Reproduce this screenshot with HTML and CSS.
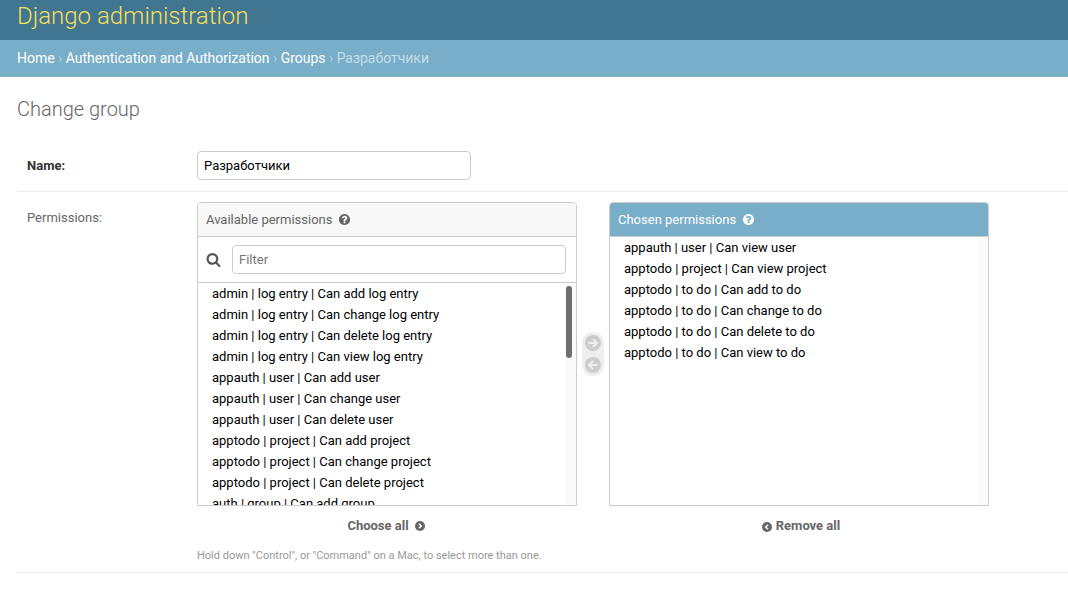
FILE: index.html
```html
<!DOCTYPE html>
<html lang="en">
<head>
<meta charset="utf-8">
<title>Change group</title>
<link rel="stylesheet" href="styles.css">
</head>
<body>
<header class="header"><span class="brand">Django administration</span></header>
<nav class="crumbs"><a>Home</a><i>›</i><a>Authentication and Authorization</a><i>›</i><a>Groups</a><i>›</i><span>Разработчики</span></nav>
<main class="content">
  <h1 class="title">Change group</h1>
  <div class="row row-name">
    <label class="label label-req">Name:</label>
    <div class="name-input">Разработчики</div>
  </div>
  <div class="row row-perm">
    <label class="label label-perm">Permissions:</label>
    <div class="field">
      <div class="selector">
        <div class="col">
          <div class="box">
            <div class="box-title">Available permissions
              <svg class="help" viewBox="0 0 1792 1792"><path fill="#666" d="M1024 1376v-192q0-14-9-23t-23-9h-192q-14 0-23 9t-9 23v192q0 14 9 23t23 9h192q14 0 23-9t9-23zm256-672q0-88-55.5-163t-138.5-116-170-41q-243 0-371 213-15 24 8 42l132 100q7 6 19 6 16 0 25-12 53-68 86-92 34-24 86-24 48 0 85.5 26t37.5 59q0 38-20 61t-68 45q-63 28-115.5 86.5t-52.5 125.5v36q0 14 9 23t23 9h192q14 0 23-9t9-23q0-19 21.5-49.5t54.5-49.5q32-18 49-28.5t46-35 44.5-48 28-60.5 12.5-81zm384 192q0 209-103 385.5t-279.5 279.5-385.5 103-385.5-103-279.5-279.5-103-385.5 103-385.5 279.5-279.5 385.5-103 385.5 103 279.5 279.5 103 385.5z"/></svg>
            </div>
            <div class="filter">
              <svg class="search" viewBox="0 0 1792 1792"><path fill="#555" d="M1216 832q0-185-131.5-316.5t-316.5-131.5-316.5 131.5-131.5 316.5 131.5 316.5 316.5 131.5 316.5-131.5 131.5-316.5zm512 832q0 52-38 90t-90 38q-54 0-90-38l-343-342q-179 124-399 124-143 0-273.5-55.5t-225-150-150-225-55.5-273.5 55.5-273.5 150-225 225-150 273.5-55.5 273.5 55.5 225 150 150 225 55.5 273.5q0 220-124 399l343 343q37 37 37 90z"/></svg>
              <div class="filter-input">Filter</div>
            </div>
            <div class="list list-available">
              <div class="opt">admin | log entry | Can add log entry</div>
              <div class="opt">admin | log entry | Can change log entry</div>
              <div class="opt">admin | log entry | Can delete log entry</div>
              <div class="opt">admin | log entry | Can view log entry</div>
              <div class="opt">appauth | user | Can add user</div>
              <div class="opt">appauth | user | Can change user</div>
              <div class="opt">appauth | user | Can delete user</div>
              <div class="opt">apptodo | project | Can add project</div>
              <div class="opt">apptodo | project | Can change project</div>
              <div class="opt">apptodo | project | Can delete project</div>
              <div class="opt">auth | group | Can add group</div>
              <div class="track"><div class="thumb"></div></div>
            </div>
          </div>
          <div class="all all-choose"><span>Choose all</span>
            <svg class="all-icon" viewBox="0 0 16 16"><circle cx="8" cy="8" r="8" fill="#666"/><path d="M6.3 4.4 10 8l-3.700 3.600" fill="none" stroke="#fff" stroke-width="2.400"/></svg>
          </div>
        </div>
        <div class="chooser">
          <svg class="move" viewBox="0 0 16 16"><circle cx="8" cy="8" r="8" fill="#ccc"/><path d="M3.500 8h8M8 4l4 4-4 4" fill="none" stroke="#eee" stroke-width="2.200"/></svg>
          <svg class="move" viewBox="0 0 16 16"><circle cx="8" cy="8" r="8" fill="#ccc"/><path d="M12.500 8h-8M8 4 4 8l4 4" fill="none" stroke="#eee" stroke-width="2.200"/></svg>
        </div>
        <div class="col">
          <div class="box">
            <div class="box-title box-title-chosen">Chosen permissions
              <svg class="help" viewBox="0 0 1792 1792"><path fill="#fff" d="M1024 1376v-192q0-14-9-23t-23-9h-192q-14 0-23 9t-9 23v192q0 14 9 23t23 9h192q14 0 23-9t9-23zm256-672q0-88-55.5-163t-138.5-116-170-41q-243 0-371 213-15 24 8 42l132 100q7 6 19 6 16 0 25-12 53-68 86-92 34-24 86-24 48 0 85.5 26t37.5 59q0 38-20 61t-68 45q-63 28-115.5 86.5t-52.5 125.5v36q0 14 9 23t23 9h192q14 0 23-9t9-23q0-19 21.5-49.5t54.5-49.5q32-18 49-28.5t46-35 44.5-48 28-60.5 12.5-81zm384 192q0 209-103 385.5t-279.5 279.5-385.5 103-385.5-103-279.5-279.5-103-385.5 103-385.5 279.5-279.5 385.5-103 385.5 103 279.5 279.5 103 385.5z"/></svg>
            </div>
            <div class="list list-chosen">
              <div class="opt">appauth | user | Can view user</div>
              <div class="opt">apptodo | project | Can view project</div>
              <div class="opt">apptodo | to do | Can add to do</div>
              <div class="opt">apptodo | to do | Can change to do</div>
              <div class="opt">apptodo | to do | Can delete to do</div>
              <div class="opt">apptodo | to do | Can view to do</div>
              <div class="track"></div>
            </div>
          </div>
          <div class="all all-remove">
            <svg class="all-icon" viewBox="0 0 16 16"><circle cx="8" cy="8" r="8" fill="#666"/><path d="M9.700 4.400 6 8l3.700 3.600" fill="none" stroke="#fff" stroke-width="2.400"/></svg>
            <span>Remove all</span>
          </div>
        </div>
      </div>
      <p class="help-text">Hold down "Control", or "Command" on a Mac, to select more than one.</p>
    </div>
  </div>
</main>
</body>
</html>
```
FILE: styles.css
```css
* { box-sizing: border-box; }
html, body { margin: 0; padding: 0; }
body {
  height: 596px;
  overflow: hidden;
  background: #fff;
  color: #333;
  font-family: Roboto, "Liberation Sans", sans-serif;
  font-size: 14px;
}
.header {
  height: 40px;
  background: #417690;
  padding-left: 17px;
  overflow: hidden;
}
.brand {
  display: block;
  font-size: 24px;
  font-weight: 300;
  line-height: 32px;
  color: #f5dd5d;
}
.crumbs {
  height: 37px;
  padding: 0 0 2px 17px;
  background: #79aec8;
  display: flex;
  align-items: center;
  color: #c4dce8;
  font-size: 13.96px;
  font-weight: 400;
}
.crumbs a { color: #fff; }
.crumbs i { font-style: normal; margin: 0 3.5px; font-weight: 300; }
.content { padding: 21px 0 0 17px; }
.title {
  margin: 0 0 30px;
  font-size: 20px;
  line-height: 23px;
  font-weight: 300;
  color: #666;
}
.row {
  display: flex;
  padding: 0 0 0 10px;
  border-bottom: 1px solid #eee;
}
.row-name { height: 41px; }
.row-perm { height: 381px; padding-top: 10px; }
.label {
  width: 170px;
  flex: none;
  font-size: 13px;
  color: #666;
  line-height: 16px;
  padding-top: 7px;
}
.label-perm { padding-top: 8px; }
.label-req { font-weight: 700; color: #333; }
.name-input {
  width: 274px;
  height: 29px;
  border: 1px solid #ccc;
  border-radius: 4px;
  padding: 0 6px;
  font-size: 13px;
  line-height: 27px;
  color: #000;
}
.field { width: 800px; }
.selector { display: flex; }
.col { width: 380px; flex: none; }
.box {
  height: 304px;
  border: 1px solid #ccc;
  border-radius: 4px 4px 0 0;
  display: flex;
  flex-direction: column;
  overflow: hidden;
}
.box-title {
  height: 34px;
  flex: none;
  display: flex;
  align-items: center;
  padding-left: 8px;
  background: #f8f8f8;
  border-bottom: 1px solid #ccc;
  font-size: 13px;
  font-weight: 400;
  color: #666;
}
.box-title-chosen { background: #79aec8; color: #fff; }
.help { width: 13px; height: 13px; margin-left: 6px; }
.filter {
  height: 46px;
  flex: none;
  display: flex;
  align-items: center;
  padding-left: 8px;
  border-bottom: 1px solid #ccc;
}
.search { width: 15px; height: 15px; margin-right: 11px; }
.filter-input {
  width: 334px;
  height: 29px;
  border: 1px solid #ccc;
  border-radius: 4px;
  padding-left: 6px;
  font-size: 13px;
  line-height: 27px;
  color: #757575;
}
.list {
  position: relative;
  flex: 1;
  min-height: 0;
  overflow: hidden;
  padding-left: 14px;
  color: #000;
}
.opt { height: 21px; line-height: 21px; font-size: 13px; white-space: nowrap; }
.track {
  position: absolute;
  top: 0;
  right: 0;
  bottom: 0;
  width: 11px;
  background: #fafafa;
}
.thumb {
  width: 6px;
  height: 72px;
  margin: 3px 0 0 1px;
  border-radius: 3px;
  background: #6e6e6e;
}
.all {
  height: 38px;
  display: flex;
  align-items: center;
  justify-content: center;
  font-size: 13px;
  font-weight: 700;
  color: #666;
}
.all-choose { gap: 6px; padding-right: 2px; }
.all-remove { gap: 4px; padding-left: 4px; }
.all-icon { width: 10px; height: 10px; margin-top: 2px; }
.all-remove .all-icon { margin-top: 3px; }
.chooser {
  align-self: flex-start;
  width: 22px;
  height: 44px;
  margin: 130px 5px 0;
  padding-top: 3px;
  border-radius: 11px;
  background: #eee;
  display: flex;
  flex-direction: column;
  align-items: center;
  gap: 6px;
  flex: none;
}
.move { width: 16px; height: 16px; flex: none; }
.help-text {
  margin: 5px 0 0;
  font-size: 11px;
  line-height: 13px;
  font-weight: 400;
  color: #999;
}
```
